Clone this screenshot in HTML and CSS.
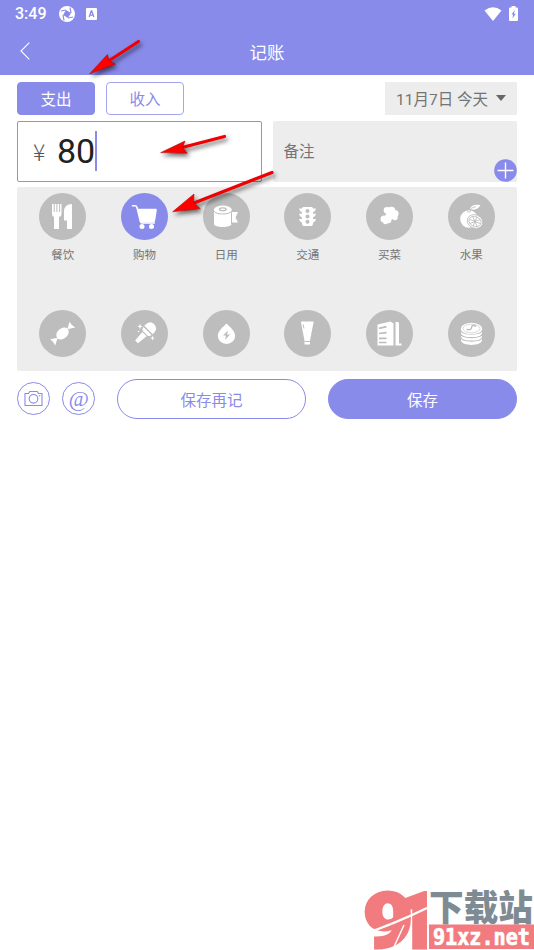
FILE: index.html
```html
<!DOCTYPE html>
<html lang="zh-CN">
<head>
<meta charset="utf-8">
<title>记账</title>
<link rel="stylesheet" href="styles.css">
</head>
<body>
<div class="screen">
  <header class="header">
    <div class="status">
      <span class="time">3:49</span>
      <svg class="status-ball" viewBox="0 0 18 18"><circle cx="9" cy="9" r="8" fill="#fff"/><path d="m8 5 5 3-3 5-5-3Z" fill="#898bea"/><path d="M8 5 3 6M13 8l-1-5.500M10 13l5-1M5 10l1 5.500" stroke="#898bea" stroke-width="1.200"/></svg>
      <svg class="status-a" viewBox="0 0 11 12"><rect width="11" height="12" rx="1" fill="#fff"/><path d="m3.200 9 2-6h.6l2 6M4 7.200h3" fill="none" stroke="#898bea" stroke-width="1.300"/></svg>
      <svg class="status-wifi" viewBox="0 0 18 14"><path d="M.5 3.500Q9-2.800 17.500 3.500L9 14Z" fill="#fff"/></svg>
      <svg class="status-battery" viewBox="0 0 9 15"><path d="M2.500 0h4v1.500H8q1 0 1 1V14q0 1-1 1H1q-1 0-1-1V2.500q0-1 1-1h1.500Z" fill="#fff"/><path d="M5.700 4 2.500 8.500h1.600L3.500 12.500 6.700 7.700H5Z" fill="#898bea"/></svg>
    </div>
    <div class="titlebar">
      <svg class="back" viewBox="0 0 10 18"><path d="M9.300.7 1 9l8.300 8.300" fill="none" stroke="#fff" stroke-width="1.100"/></svg>
      <h1>记账</h1>
    </div>
  </header>

  <main class="content">
    <div class="tabs">
      <button class="tab active">支出</button>
      <button class="tab">收入</button>
      <div class="date"><span>11月7日 今天</span><i class="caret"></i></div>
    </div>

    <div class="fields">
      <div class="amount"><span class="yen">¥</span><span class="value">80</span><i class="cursor"></i></div>
      <div class="note"><span>备注</span>
        <svg class="plus" viewBox="0 0 23 23"><circle cx="11.500" cy="11.500" r="11.300" fill="#898bea"/><path d="M3.500 11.500h16M11.500 3.500v16" stroke="#fff" stroke-width="1.400"/></svg>
      </div>
    </div>

    <div class="categories">
      <div class="cat"><svg class="icon" viewBox="0 0 47 47"><path d="M13 11h1.700v8h1V11h1.700v8h1V11h1.700v8h1V11h1.400v9.500q0 3-2.500 3.500V36h-5V24Q13 23.500 13 20.500ZM33 11v25h-5V27.500h-3V19q0-8 8-8Z"/></svg><span>餐饮</span></div>
      <div class="cat selected"><svg class="icon" viewBox="0 0 47 47"><path d="M11.500 12.800h2.300q1.700 0 2.200 1.700l3.400 14q.4 1.500 2 1.500h12" fill="none" stroke="#fff" stroke-width="1.600" stroke-linecap="round"/><path d="M16 15.800h19q1 0 .8 1.200l-1.500 10q-.3 2.500-2.500 2.500H20Z"/><circle cx="21" cy="33.500" r="2.500"/><circle cx="30.500" cy="33.500" r="2.500"/></svg><span>购物</span></div>
      <div class="cat"><svg class="icon" viewBox="0 0 47 47"><path d="M11 16.500v14.500c0 4 17.500 4 17.500 0v-1.500H35l-2.500-5 2.500-5.500h-6.500v-2.500Z"/><ellipse cx="19.800" cy="16.500" rx="8.800" ry="4"/><path d="M11 18c1 4 16.500 4 17.500 0M28.500 19v12" fill="none" stroke="#bdbdbd"/><ellipse cx="19.800" cy="16.300" rx="3.400" ry="1.400" fill="none" stroke="#bdbdbd" stroke-width="1.300"/></svg><span>日用</span></div>
      <div class="cat"><svg class="icon" viewBox="0 0 47 47"><path d="M19.500 14h8q1.500 0 1.500 1.500h3q-.5 3-3 3.700v1.600h3q-.5 3-3 3.700v1.600h3q-.5 3-3 3.700V31q0 2-2 2h-7q-2 0-2-2v-1.200q-2.500-.7-3-3.700h3v-1.600q-2.500-.7-3-3.700h3v-1.600q-2.500-.7-3-3.700h3Q18 14 19.500 14Z"/><g fill="#bdbdbd"><circle cx="23.500" cy="18" r="2"/><circle cx="23.500" cy="23.400" r="2"/><circle cx="23.500" cy="28.800" r="2"/></g></svg><span>交通</span></div>
      <div class="cat"><svg class="icon" viewBox="0 0 47 47"><circle cx="21" cy="17.200" r="3.300"/><circle cx="25.500" cy="17.500" r="3.800"/><circle cx="29" cy="20.500" r="3.600"/><circle cx="29" cy="24.500" r="2.700"/><circle cx="24" cy="22.500" r="4.500"/><circle cx="18" cy="26" r="3.500"/><circle cx="19.500" cy="28.800" r="2.500"/><circle cx="22.500" cy="27.500" r="2.800"/></svg><span>买菜</span></div>
      <div class="cat"><svg class="icon" viewBox="0 0 47 47"><circle cx="21" cy="26" r="8.800"/><path d="M22 15.500q2-5 10.500-3.500-3 5.500-9 4.500Z"/><path d="M19 18.800h4M23 15.500l5-2" stroke="#bdbdbd" stroke-width=".8"/><ellipse cx="27" cy="28.500" rx="8" ry="6.700" transform="rotate(22 27 28.500)" stroke="#bdbdbd" stroke-width=".8"/><g fill="none" stroke="#bdbdbd" stroke-width=".8" transform="rotate(22 27 28.500)"><ellipse cx="27" cy="28.500" rx="6.300" ry="4.900"/><path d="M21 28.500h12M27 23.700v9.600M23 24.800l8 7.500M31 24.800l-8 7.500"/></g></svg><span>水果</span></div>
      <div class="cat"><svg class="icon" viewBox="0 0 47 47"><g transform="rotate(-42 23.500 23.500)"><ellipse cx="23.500" cy="23.500" rx="7" ry="5.200"/><path d="m17 23.500-6.500-4q1 4-.5 8ZM30 23.500l6.500-4q-1 4 .5 8Z"/></g></svg></div>
      <div class="cat"><svg class="icon" viewBox="0 0 47 47"><g transform="rotate(45 26.500 21)"><path d="M20.500 18.500q0-7 6-7t6 7v1h-12ZM20.800 21h11.400q-.2 2.300-2.200 3.300h-7q-2-1-2.200-3.300ZM23.500 25.300h6l-1 11.200h-4Z"/></g><path d="m19 13.500.7 2.300 2 .7-2 .7-.7 2.300-.7-2.300-2-.7 2-.7ZM31.500 25.500l.6 2 1.900.6-1.900.6-.6 2-.6-2-1.900-.6 1.900-.6Z"/><circle cx="17.500" cy="21.500" r=".8"/></svg></div>
      <div class="cat"><svg class="icon" viewBox="0 0 47 47"><path d="M23.500 13.500c4 3.800 8.700 7.800 8.700 12.300a8.700 8.200 0 0 1-17.400 0c0-4.500 4.700-8.500 8.700-12.300Z"/><path d="m25 20.500-5 5h3l-1 4.500 5-5.500h-3Z" fill="#bdbdbd"/></svg></div>
      <div class="cat"><svg class="icon" viewBox="0 0 47 47"><path d="M17 11.500h12.500v1l-3.500 18v4h-5.500v-4l-3.500-18Z"/><path d="M19 14.500l1 4M20.500 31.500H26" stroke="#bdbdbd" stroke-width="1"/></svg></div>
      <div class="cat"><svg class="icon" viewBox="0 0 47 47"><path d="m11.500 14.500 13-3 3 2v22h-16ZM29.500 12h2.500l1 1v20.500h2.500v2h-6Z"/><path d="m13 18.300 7.500-1.600M13 23.500l7.500-.8M13 28.300h7.500M13 32.500h7.500" stroke="#bdbdbd" stroke-width="1.700"/></svg></div>
      <div class="cat"><svg class="icon" viewBox="0 0 47 47"><path d="M13 18v12c0 6.500 21 6.500 21 0V18Z"/><path d="M12.500 20c1 5.500 21 5.500 22 0M12.500 23.500c1 5.500 21 5.500 22 0M12.500 27c1 5.500 21 5.500 22 0" fill="none" stroke="#bdbdbd" stroke-width="1.200"/><ellipse cx="23.500" cy="18.500" rx="10.500" ry="5.800"/><ellipse cx="23.500" cy="18.500" rx="8.500" ry="4.300" fill="none" stroke="#bdbdbd" stroke-width=".6"/><path d="M28 16.300c-3-1.500-4.500-.5-4.500 1.200s-1 3-5 1.800" fill="none" stroke="#bdbdbd" stroke-width="1.400"/></svg></div>
    </div>

    <div class="actions">
      <button class="round"><svg viewBox="0 0 31 31"><path d="M7 10.500h3.500l1.300-2h7.400l1.300 2H24v12H7Z"/><circle cx="15.500" cy="15.800" r="4.300"/><path d="M20.800 12.700h1.500"/></svg></button>
      <button class="round at">@</button>
      <button class="pill again">保存再记</button>
      <button class="pill save">保存</button>
    </div>
  </main>

  <svg class="arrows" viewBox="0 0 534 220">
    <g class="arrow"><path d="M138.500 41.500 107 62" /><path class="head" d="m90 73.500 17.500-19 1.500 6.500 6 3Z"/></g>
    <g class="arrow"><path d="M224.500 136.500 182 147.500"/><path class="head" d="m161 152.500 24-11.500-2.500 6.500 4.500 5.500Z"/></g>
    <g class="arrow"><path d="M272 172.500 194 203"/><path class="head" d="m173 211.500 21-17.500-.5 8.500 6.500 6Z"/></g>
  </svg>

  <svg class="watermark" viewBox="0 0 180 70">
    <g class="logo-digits">
      <text x="9" y="67" font-size="76" textLength="50" lengthAdjust="spacingAndGlyphs">9</text>
      <text x="42" y="67.500" font-size="77" textLength="42" lengthAdjust="spacingAndGlyphs">1</text>
    </g>
    <path d="M39 69 50 45" stroke="#fff" stroke-width="1.500"/>
    <path d="M10 54Q40 44 73 28" fill="none" stroke="#fff" stroke-width="2.500"/>
    <text x="75" y="41" font-family="Noto Sans CJK SC" font-weight="900" font-size="36" textLength="104" lengthAdjust="spacingAndGlyphs" fill="#7f8b93">下载站</text>
    <rect x="75" y="44.500" width="105" height="24.500" fill="#f17b7e"/>
    <text x="79" y="65" font-family="DejaVu Sans Mono" font-weight="700" font-size="23" textLength="97" lengthAdjust="spacingAndGlyphs" fill="#fff" stroke="#fff" stroke-width=".7">91xz.net</text>
  </svg>
</div>
</body>
</html>
```
FILE: styles.css
```css
* { box-sizing: border-box; }
body {
  margin: 0;
  background: #fff;
  font-family: Roboto, "Noto Sans CJK SC", sans-serif;
  font-weight: 400;
}
button { font: inherit; padding: 0; }
svg { display: block; }
.screen { position: relative; height: 950px; overflow: hidden; }
.header { height: 75px; background: #898bea; color: #fff; }
.status { display: flex; align-items: center; height: 27px; padding: 0 15px; }
.time { width: 43px; font-size: 16px; font-weight: 500; }
.status-ball { width: 18px; height: 18px; }
.status-a { width: 11px; height: 12px; margin-left: 10px; }
.status-wifi { width: 18px; height: 14px; margin-left: auto; }
.status-battery { width: 9px; height: 15px; margin: 0 1px 0 7px; }
.titlebar { display: flex; align-items: center; height: 48px; padding: 0 20px; }
.back { width: 10px; height: 18px; }
h1 { flex: 1; margin: 4px 10px 0 0; font-size: 17.5px; line-height: 25px; font-weight: 400; text-align: center; }
.content { padding: 6.5px 17px 0; }
.tabs { display: flex; gap: 11px; height: 33px; }
.tab {
  width: 78px;
  padding-bottom: 1px;
  border: 1px solid #a3a5f0;
  border-radius: 4px;
  background: #fff;
  color: #898bea;
  font-size: 15.5px;
}
.tab.active { background: #898bea; border-color: #898bea; color: #fff; }
.date {
  display: flex;
  align-items: center;
  gap: 8px;
  width: 132px;
  margin-left: auto;
  padding: 0 0 1px 11px;
  background: #ededed;
  color: #747474;
  font-size: 15.5px;
  white-space: nowrap;
}
.caret { border: 5px solid transparent; border-top: 6px solid #666; border-bottom: 0; }
.fields { display: flex; justify-content: space-between; height: 61px; margin-top: 6px; }
.amount, .note { width: 244.5px; display: flex; align-items: center; border-radius: 2px; }
.amount { padding-left: 15px; border: 1px solid #8d8fea; }
.yen { width: 24px; font-family: "Noto Sans CJK SC"; font-size: 23px; line-height: 30px; font-weight: 300; color: #555; }
.value { font-size: 34px; color: #222; }
.cursor { width: 2px; height: 40px; background: #898bea; }
.note { position: relative; padding: 0 0 2px 11px; background: #ededed; color: #747474; font-size: 15.5px; }
.plus { position: absolute; right: 0; bottom: 0; width: 23px; height: 23px; }
.categories {
  display: grid;
  grid-template-columns: repeat(6, 1fr);
  grid-auto-rows: 116.5px;
  height: 184px;
  margin-top: 5.5px;
  padding: 6px 5px 0;
  overflow: hidden;
  border-radius: 2px;
  background: #ededed;
}
.cat { display: flex; flex-direction: column; align-items: center; gap: 6px; color: #747474; font-size: 11.5px; line-height: 18px; }
.icon { width: 47px; height: 47px; border-radius: 50%; background: #bdbdbd; fill: #fff; }
.selected .icon { background: #898bea; }
.actions { display: flex; align-items: center; height: 40px; margin-top: 7.5px; }
.round {
  width: 33px;
  height: 33px;
  margin-right: 12px;
  border: 1px solid #898bea;
  border-radius: 50%;
  background: #fff;
  color: #898bea;
}
.round svg { fill: none; stroke: #898bea; stroke-width: 1.1; }
.at { font-family: "Liberation Serif", serif; font-size: 22px; line-height: 27px; font-style: italic; margin-right: 22px; }
.pill { width: 189px; height: 40px; border: 1px solid #898bea; border-radius: 20px; font-size: 15.5px; }
.again { background: #fff; color: #898bea; }
.save { margin-left: auto; background: #898bea; color: #fff; }
.arrows { position: absolute; top: 0; left: 0; width: 534px; height: 220px; pointer-events: none; }
.arrow { fill: none; stroke: #f00000; stroke-width: 3.2; stroke-linecap: round; filter: drop-shadow(2px 3px 2px rgba(0, 0, 0, .55)); }
.head { fill: #f00; stroke: #b00000; stroke-width: .6; }
.watermark { position: absolute; left: 354px; top: 880px; width: 180px; height: 70px; }
.logo-digits { fill: #f17b7e; stroke: #f17b7e; stroke-width: 3; font-family: Roboto, sans-serif; font-weight: 900; }
```
